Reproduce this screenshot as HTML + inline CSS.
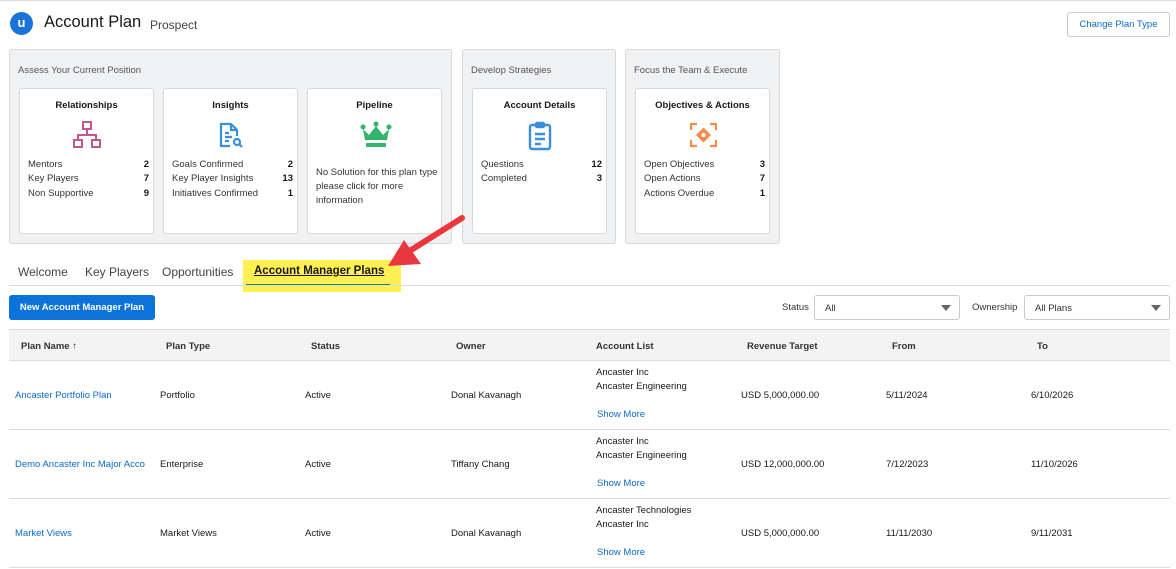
<!DOCTYPE html>
<html><head><meta charset="utf-8"><style>
*{margin:0;padding:0;box-sizing:border-box}
body{width:1176px;height:569px;background:#fff;font-family:"Liberation Sans",sans-serif;color:#181818;position:relative;overflow:hidden;font-size:9.5px}
.a{position:absolute;white-space:nowrap}
.grp{position:absolute;background:#f0f1f3;border:1px solid #d8d8d8;border-radius:3px}
.card{position:absolute;background:#fff;border:1px solid #d8d8d8;border-radius:3px;top:38px;width:135px;height:146px}
.gt{position:absolute;left:8px;top:15px;font-size:9.5px;color:#555}
.ct{position:absolute;top:11px;width:100%;text-align:center;font-weight:bold;font-size:9.5px}
.row{position:absolute;left:8px;width:121px;font-size:9.5px;color:#333}
.row b{position:absolute;right:0;color:#181818}
.hd{font-weight:bold;color:#333;font-size:9.5px}
.ln{position:absolute;left:9px;width:1161px;height:1px;background:#ddd}
.lk{color:#0b6bcb}
.tab{position:absolute;top:265px;font-size:12px;color:#444;white-space:nowrap}
</style></head><body>
<div class="a" style="left:0;top:0;width:1176px;height:1px;background:#ddd"></div>
<div class="a" style="left:10px;top:12px;width:23px;height:23px;border-radius:50%;background:#1b73d9;color:#fff;font-weight:bold;font-size:13px;text-align:center;line-height:22px">u</div>
<div class="a" style="left:44px;top:13px;font-size:16.5px;color:#181818">Account Plan</div>
<div class="a" style="left:150px;top:18px;font-size:12px;color:#444">Prospect</div>
<div class="a" style="left:1067px;top:12px;width:103px;height:25px;border:1px solid #c9c9c9;border-radius:3px;color:#0b6bcb;font-size:9.5px;text-align:center;line-height:23px">Change Plan Type</div>

<div class="grp" style="left:9px;top:49px;width:443px;height:195px"><div class="gt">Assess Your Current Position</div>
 <div class="card" style="left:9px"><div class="ct">Relationships</div>
  <svg class="a" style="left:53px;top:32px" width="28" height="28" viewBox="0 0 28 28" fill="none" stroke="#c2578b" stroke-width="2"><rect x="10" y="1" width="8" height="7"/><rect x="1" y="19" width="8" height="7"/><rect x="19" y="19" width="8" height="7"/><path d="M14 8v6M5 19v-5h18v5"/></svg>
  <div class="row" style="top:70px">Mentors<b>2</b></div><div class="row" style="top:84px">Key Players<b>7</b></div><div class="row" style="top:99px">Non Supportive<b>9</b></div></div>
 <div class="card" style="left:153px"><div class="ct">Insights</div>
  <svg class="a" style="left:54px;top:33px" width="26" height="27" viewBox="0 0 26 27" fill="none" stroke="#3a8fdb" stroke-width="2.2"><path d="M12 24H3V2h10l6 6v6"/><path d="M13 2v6h6M7 11h4M7 15h7M7 19h4"/><circle cx="19" cy="20" r="3"/><path d="M21 22l3 3"/></svg>
  <div class="row" style="top:70px">Goals Confirmed<b>2</b></div><div class="row" style="top:84px">Key Player Insights<b>13</b></div><div class="row" style="top:99px">Initiatives Confirmed<b>1</b></div></div>
 <div class="card" style="left:297px"><div class="ct">Pipeline</div>
  <svg class="a" style="left:52px;top:32px" width="32" height="28" viewBox="0 0 32 28" fill="#33b36b"><circle cx="3" cy="6" r="2.5"/><circle cx="16" cy="3" r="2.5"/><circle cx="29" cy="6" r="2.5"/><path d="M3 8l6 6 7-9 7 9 6-6-2 11H5z"/><rect x="6" y="22" width="20" height="4" rx="1"/></svg>
  <div class="a" style="left:8px;top:77px;font-size:9.5px;color:#333;white-space:normal;width:126px;line-height:14px">No Solution for this plan type please click for more information</div></div>
</div>
<div class="grp" style="left:462px;top:49px;width:154px;height:195px"><div class="gt">Develop Strategies</div>
 <div class="card" style="left:9px"><div class="ct">Account Details</div>
  <svg class="a" style="left:55px;top:32px" width="26" height="30" viewBox="0 0 26 30" fill="none" stroke="#3a8fdb" stroke-width="2.4"><rect x="2" y="4" width="20" height="24" rx="2"/><rect x="8" y="2" width="8" height="4" rx="1"/><path d="M7 13h10M7 18h10M7 23h6"/></svg>
  <div class="row" style="top:70px">Questions<b>12</b></div><div class="row" style="top:84px">Completed<b>3</b></div></div>
</div>
<div class="grp" style="left:625px;top:49px;width:155px;height:195px"><div class="gt">Focus the Team &amp; Execute</div>
 <div class="card" style="left:9px"><div class="ct">Objectives &amp; Actions</div>
  <svg class="a" style="left:54px;top:33px" width="27" height="26" viewBox="0 0 27 26" fill="none" stroke="#f58b4c" stroke-width="2.2"><path d="M1 8V2h6M20 2h6v6M26 18v6h-6M7 24H1v-6"/><path d="M13.5 7l6 6-6 6-6-6z" fill="#f58b4c"/><circle cx="13.5" cy="13" r="2" fill="#fff" stroke="none"/></svg>
  <div class="row" style="top:70px">Open Objectives<b>3</b></div><div class="row" style="top:84px">Open Actions<b>7</b></div><div class="row" style="top:99px">Actions Overdue<b>1</b></div></div>
</div>

<div class="a" style="left:243px;top:260px;width:158px;height:32px;background:#fdf053"></div>
<div class="tab" style="left:18px">Welcome</div>
<div class="tab" style="left:85px">Key Players</div>
<div class="tab" style="left:162px">Opportunities</div>
<div class="tab" style="left:254px;font-weight:bold;text-decoration:underline;color:#181818;font-size:11.5px">Account Manager Plans</div>
<div class="a" style="left:246px;top:284px;width:144px;height:2px;background:#1f8a4c"></div>
<div class="ln" style="top:285px"></div>
<svg class="a" style="left:380px;top:210px" width="95" height="70" viewBox="0 0 95 70"><path d="M82 8L28 42" stroke="#e8383d" stroke-width="6" stroke-linecap="round"/><path d="M8 56l33-2-17-24z" fill="#e8383d"/></svg>

<div class="a" style="left:9px;top:295px;width:146px;height:25px;background:#0b72d9;border-radius:3px;color:#fff;font-weight:bold;font-size:9.5px;text-align:center;line-height:25px">New Account Manager Plan</div>
<div class="a" style="left:782px;top:302px;color:#333">Status</div>
<div class="a" style="left:814px;top:295px;width:146px;height:25px;border:1px solid #c9c9c9;border-radius:3px;padding:7px 10px;color:#333">All</div>
<div class="a" style="left:941px;top:305px;border:5px solid transparent;border-top:6px solid #666"></div>
<div class="a" style="left:972px;top:302px;color:#333">Ownership</div>
<div class="a" style="left:1024px;top:295px;width:146px;height:25px;border:1px solid #c9c9c9;border-radius:3px;padding:7px 10px;color:#333">All Plans</div>
<div class="a" style="left:1151px;top:305px;border:5px solid transparent;border-top:6px solid #666"></div>

<div class="a" style="left:9px;top:329px;width:1161px;height:32px;background:#f3f3f3;border-top:1px solid #ddd;border-bottom:1px solid #ddd"></div>
<div class="a hd" style="left:21px;top:341px">Plan Name ↑</div>
<div class="a hd" style="left:166px;top:341px">Plan Type</div>
<div class="a hd" style="left:311px;top:341px">Status</div>
<div class="a hd" style="left:456px;top:341px">Owner</div>
<div class="a hd" style="left:596px;top:341px">Account List</div>
<div class="a hd" style="left:747px;top:341px">Revenue Target</div>
<div class="a hd" style="left:892px;top:341px">From</div>
<div class="a hd" style="left:1037px;top:341px">To</div>

<div class="a lk" style="left:15px;top:390px">Ancaster Portfolio Plan</div><div class="a" style="left:160px;top:390px">Portfolio</div><div class="a" style="left:305px;top:390px">Active</div><div class="a" style="left:451px;top:390px">Donal Kavanagh</div>
<div class="a" style="left:596px;top:367px">Ancaster Inc</div><div class="a" style="left:596px;top:381px">Ancaster Engineering</div><div class="a lk" style="left:597px;top:409px">Show More</div>
<div class="a" style="left:741px;top:390px">USD 5,000,000.00</div><div class="a" style="left:886px;top:390px">5/11/2024</div><div class="a" style="left:1031px;top:390px">6/10/2026</div>
<div class="ln" style="top:429px"></div>

<div class="a lk" style="left:15px;top:459px">Demo Ancaster Inc Major Acco</div><div class="a" style="left:160px;top:459px">Enterprise</div><div class="a" style="left:305px;top:459px">Active</div><div class="a" style="left:451px;top:459px">Tiffany Chang</div>
<div class="a" style="left:596px;top:436px">Ancaster Inc</div><div class="a" style="left:596px;top:450px">Ancaster Engineering</div><div class="a lk" style="left:597px;top:478px">Show More</div>
<div class="a" style="left:741px;top:459px">USD 12,000,000.00</div><div class="a" style="left:886px;top:459px">7/12/2023</div><div class="a" style="left:1031px;top:459px">11/10/2026</div>
<div class="ln" style="top:498px"></div>

<div class="a lk" style="left:15px;top:528px">Market Views</div><div class="a" style="left:160px;top:528px">Market Views</div><div class="a" style="left:305px;top:528px">Active</div><div class="a" style="left:451px;top:528px">Donal Kavanagh</div>
<div class="a" style="left:596px;top:505px">Ancaster Technologies</div><div class="a" style="left:596px;top:519px">Ancaster Inc</div><div class="a lk" style="left:597px;top:547px">Show More</div>
<div class="a" style="left:741px;top:528px">USD 5,000,000.00</div><div class="a" style="left:886px;top:528px">11/11/2030</div><div class="a" style="left:1031px;top:528px">9/11/2031</div>
<div class="ln" style="top:567px"></div>
</body></html>
